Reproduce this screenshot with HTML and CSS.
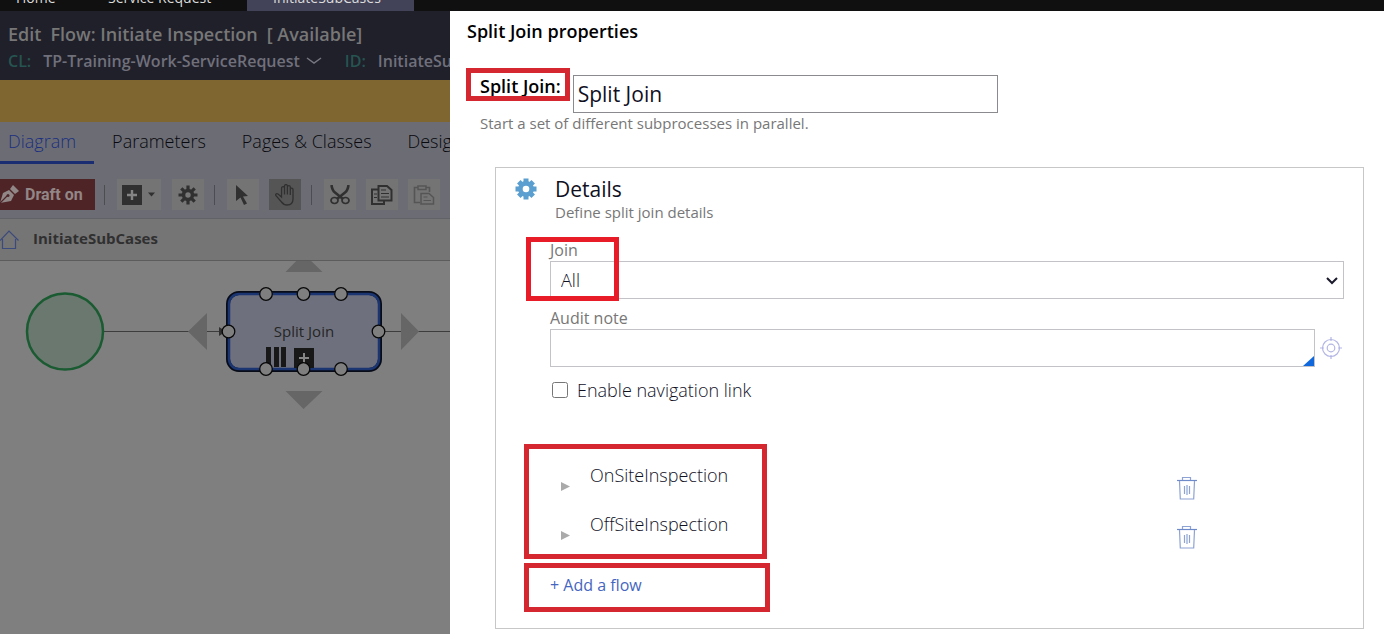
FILE: index.html
```html
<!DOCTYPE html>
<html lang="en">
<head>
<meta charset="utf-8">
<title>Split Join properties</title>
<link rel="stylesheet" href="styles.css">
</head>
<body>
<nav class="topbar">
  <a class="toptab toptab-home" href="#">Home</a>
  <a class="toptab toptab-service" href="#">Service Request</a>
  <a class="toptab toptab-active" href="#">InitiateSubCases</a>
</nav>
<div class="workspace">
  <section class="editor">
    <header class="rule-header">
      <h1 class="rule-title"><span>Edit</span><span>Flow: Initiate Inspection</span><span>[ Available]</span></h1>
      <div class="rule-meta">
        <span class="meta-key">CL:</span><span class="meta-class">TP-Training-Work-ServiceRequest</span>
        <svg class="meta-chevron" width="16" height="8" viewBox="0 0 16 8"><path d="M1 1l7 5 7-5" fill="none" stroke="#777781" stroke-width="1.5"/></svg>
        <span class="meta-key">ID:</span><span>InitiateSubCases</span>
      </div>
    </header>
    <div class="warning-bar"></div>
    <nav class="tabs">
      <a class="tab tab-active" href="#">Diagram</a>
      <a class="tab" href="#">Parameters</a>
      <a class="tab" href="#">Pages &amp; Classes</a>
      <a class="tab" href="#">Design</a>
    </nav>
    <div class="toolbar">
      <button class="draft"><svg width="19" height="19" viewBox="0 0 19 19"><path d="M0 18L3 8l6-3 5 5-3 6z" fill="#918787"/><path d="M10 4l3-4 6 6-4 3z" fill="#918787"/><path d="M0 18l7-7" stroke="#4e2427" stroke-width="1.200"/><circle cx="8" cy="10.500" r="1.500" fill="#4e2427"/></svg>Draft on</button>
      <span class="divider"></span>
      <button class="tool tool-add" aria-label="Add shape"><svg width="34" height="20" viewBox="0 0 34 20"><path d="M0 0h20v20H0z" fill="#303030"/><path d="M10 5v10M5 10h10" stroke="#858585" stroke-width="2.400"/><path d="M26 7.500h7l-3.500 4z" fill="#303030"/></svg></button>
      <button class="tool" aria-label="Settings"><svg width="20" height="20" viewBox="-10 -10 20 20"><g stroke="#303030" stroke-width="3.200"><path d="M0-9.500V9.500M-9.500 0H9.500M-6.700-6.700L6.700 6.700M6.700-6.700L-6.700 6.700"/></g><circle r="6.200" fill="#303030"/><circle r="2.700" fill="#777"/></svg></button>
      <span class="divider"></span>
      <button class="tool tool-select" aria-label="Select"><svg width="20" height="20" viewBox="0 0 20 20"><path d="M3 0l12 11-5 .5 4 7-3 1.500-3.500-7.500L3 16z" fill="#303030"/></svg></button>
      <button class="tool tool-on" aria-label="Pan"><svg width="20" height="22" viewBox="0 0 20 22"><path d="M6.500 13L3 10c-1.500-1-3 .2-2 1.700L6.500 18c1.500 2 3 3 5.500 3 4 0 6-2 6-6V5.500c0-1.800-2.700-1.800-2.700 0V11 3c0-1.900-2.900-1.900-2.900 0v7.500V2c0-1.900-2.900-1.900-2.900 0v8.500V4c0-1.800-2.900-1.800-2.900 0z" fill="none" stroke="#303030" stroke-width="1.300"/></svg></button>
      <span class="divider"></span>
      <button class="tool" aria-label="Cut"><svg width="20" height="20" viewBox="0 0 20 20"><path d="M1.500 0C2 4 3 6 5 7.500l8 6.500M18.500 0C18 4 17 6 15 7.500L7 14" fill="none" stroke="#303030" stroke-width="2.600"/><ellipse cx="4.500" cy="15.500" rx="3.500" ry="3" fill="none" stroke="#303030" stroke-width="1.700"/><ellipse cx="15.500" cy="15.500" rx="3.500" ry="3" fill="none" stroke="#303030" stroke-width="1.700"/></svg></button>
      <button class="tool" aria-label="Copy"><svg width="22" height="20" viewBox="0 0 22 20"><path d="M7 4.500H1V19h12v-3" fill="none" stroke="#303030" stroke-width="2"/><path d="M7.500 1H16l4.500 4v10.500h-13z" fill="none" stroke="#303030" stroke-width="2"/><path d="M10 5h5M10 8.500h8M10 12h8M3 9h3M3 12.500h3" stroke="#303030" stroke-width="1.200"/></svg></button>
      <button class="tool" aria-label="Paste"><svg width="22" height="20" viewBox="0 0 22 20"><path d="M7 17.500H1.500v-15H5m8 0h3.500V7" fill="none" stroke="#555" stroke-width="1.600"/><path d="M5 1h8v3.500H5zM8 8.500h8l4.500 4V19H8z" fill="none" stroke="#555" stroke-width="1.500"/><path d="M10.500 12h4M10.500 15.500h7.500" stroke="#555"/></svg></button>
      <button class="tool" aria-label="Delete"></button>
    </div>
    <div class="crumbs">
      <svg width="19" height="24" viewBox="0 -4 19 24"><path d="M0 10.500L9 1l9.500 9.500M2.500 9v9.500h13V9" fill="none" stroke="#3b4a7c" stroke-width="1.200"/></svg>
      <span>InitiateSubCases</span>
    </div>
    <div class="canvas">
      <svg class="diagram" width="450" height="370" viewBox="0 261 450 370">
        <path d="M103 331.500H450" stroke="#3d3d3d"/>
        <circle cx="65" cy="331.500" r="38" fill="#6b786f" stroke="#1a5b32" stroke-width="2.500"/>
        <g fill="#666"><path d="M188 331.500l19-18.500v37zM419 331.500l-18-18.500v37zM303.500 253.500l19 18.500h-37zM303.500 409l19-18h-37z"/></g>
        <path d="M219 327l7 4.500-7 4.500z" fill="#303030"/>
        <rect x="228" y="293" width="152" height="77" rx="11" fill="#6e717d" stroke="#080c18" stroke-width="4"/>
        <rect x="229" y="294" width="150" height="75" rx="10" fill="none" stroke="#1b3572" stroke-width="2.500"/>
        <text class="node-label" x="304" y="337" text-anchor="middle">Split Join</text>
        <path d="M266 347h5v20h-5zM274 347h5v20h-5zM281 347h5v20h-5zM294 348h20v20h-20z" fill="#181818"/>
        <path d="M304 353v10M299 358h10" stroke="#858585" stroke-width="2"/>
        <g fill="#7f7f7f" stroke="#080808" stroke-width="1.300"><circle cx="266" cy="294" r="6.300"/><circle cx="303.500" cy="294" r="6.300"/><circle cx="341" cy="294" r="6.300"/><circle cx="228.500" cy="331.500" r="6.300"/><circle cx="378.500" cy="331.500" r="6.300"/><circle cx="266" cy="369" r="6.300"/><circle cx="303.500" cy="369" r="6.300"/><circle cx="341" cy="369" r="6.300"/></g>
      </svg>
    </div>
  </section>
  <main class="panel">
    <h2 class="panel-title">Split Join properties</h2>
    <div class="name-row">
      <label class="name-label" for="name">Split Join:<span class="mark mark-name"></span></label>
      <input class="field name-field" id="name" value="Split Join">
    </div>
    <p class="hint">Start a set of different subprocesses in parallel.</p>
    <section class="card">
      <header class="card-head">
        <svg width="22" height="22" viewBox="-11 -11 22 22"><g stroke="#5a9fd0" stroke-width="5"><path d="M0-10.500V10.500M-10.500 0H10.500M-7.200-7.200L7.200 7.200M7.200-7.200L-7.200 7.200"/></g><circle r="7.900" fill="#5a9fd0"/><circle r="3.300" fill="#fff"/></svg>
        <div><h3 class="card-title">Details</h3><p class="hint card-hint">Define split join details</p></div>
      </header>
      <div class="form">
        <div class="group">
          <label class="label" for="join">Join</label>
          <select class="field join-field" id="join"><option>All</option></select>
          <svg class="select-arrow" width="12" height="8" viewBox="0 0 12 8"><path d="M1 1l5 5 5-5" fill="none" stroke="#1a1a2c" stroke-width="2"/></svg>
          <span class="mark mark-join"></span>
        </div>
        <label class="label audit-label" for="audit">Audit note</label>
        <div class="audit-row">
          <div class="audit-wrap"><input class="field" id="audit"><span class="corner"></span></div>
          <button class="icon-button" aria-label="Select audit note"><svg width="22" height="22" viewBox="0 0 22 22"><g fill="none" stroke="#b3b5e4" stroke-width="1.200"><circle cx="11" cy="11" r="8.500"/><circle cx="11" cy="11" r="3.800"/><path d="M11 0v4M11 18v4M0 11h4M18 11h4"/></g></svg></button>
        </div>
        <label class="check"><input type="checkbox">Enable navigation link</label>
        <div class="flows">
          <div class="flow"><button class="expand" aria-label="Expand OnSiteInspection"><svg width="9" height="9" viewBox="0 0 9 9"><path d="M0 0l9 4.500L0 9z" fill="#aaa"/></svg></button><span class="flow-name">OnSiteInspection</span><button class="icon-button" aria-label="Delete OnSiteInspection"><svg width="20" height="24" viewBox="0 0 20 24"><g fill="none" stroke="#8ea3d4" stroke-width="1.200"><path d="M0 4.500h20" stroke="#6f8ac8"/><path d="M5.500 4V1.500h8V4M2.500 5l.8 18h13.400l.8-18M7.500 10v8M10 9v10M12.500 10v8"/></g></svg></button></div>
          <div class="flow"><button class="expand" aria-label="Expand OffSiteInspection"><svg width="9" height="9" viewBox="0 0 9 9"><path d="M0 0l9 4.500L0 9z" fill="#aaa"/></svg></button><span class="flow-name">OffSiteInspection</span><button class="icon-button" aria-label="Delete OffSiteInspection"><svg width="20" height="24" viewBox="0 0 20 24"><g fill="none" stroke="#8ea3d4" stroke-width="1.200"><path d="M0 4.500h20" stroke="#6f8ac8"/><path d="M5.500 4V1.500h8V4M2.500 5l.8 18h13.400l.8-18M7.500 10v8M10 9v10M12.500 10v8"/></g></svg></button></div>
          <span class="mark mark-flows"></span>
        </div>
        <div class="add"><a class="add-link" href="#">+ Add a flow</a><span class="mark mark-add"></span></div>
      </div>
    </section>
  </main>
</div>
</body>
</html>
```
FILE: styles.css
```css
* { box-sizing: border-box; }
body { margin: 0; min-height: 100vh; display: flex; flex-direction: column; font-family: "Open Sans", "Noto Sans", sans-serif; font-size: 18px; font-weight: 300; color: #10101f; background: #fff; }
h1, h2, h3, p { margin: 0; }
a { text-decoration: none; color: inherit; }
button { border: 0; padding: 0; background: none; font: inherit; color: inherit; }
svg { display: block; flex: none; }

.topbar { display: flex; align-items: flex-end; height: 11px; overflow: hidden; background: #101010; color: #dcdcdc; font-size: 14px; font-weight: 500; line-height: 26px; }
.toptab-home { padding: 0 16px; width: 92px; }
.toptab-service { padding: 0 16px; width: 155px; white-space: nowrap; }
.toptab-active { padding: 0 26px; width: 167px; background: #424258; }

.workspace { flex: 1; display: flex; }
.editor { flex: 0 0 450px; overflow: hidden; display: flex; flex-direction: column; background: #7f7f7f; }
.rule-header { height: 69px; padding: 10px 8px 0; background: #20202b; font-weight: 600; white-space: nowrap; }
.rule-title { display: flex; gap: 9px; font-size: 18px; line-height: 26px; font-weight: 600; color: #777; }
.rule-meta { display: flex; align-items: center; margin-top: 1px; font-size: 16px; line-height: 26px; color: #70707b; }
.meta-key { color: #265450; margin-right: 12px; }
.meta-chevron { margin: 0 23px 0 6px; }
.warning-bar { height: 42px; background: #7f6530; }
.tabs { display: flex; gap: 36px; height: 43px; padding-left: 8px; background: #6c6d74; color: #08080e; line-height: 38px; white-space: nowrap; }
.tab-active { color: #1b2f80; border-bottom: 3px solid #1b2d72; margin-left: -8px; padding-left: 8px; padding-right: 18px; margin-right: -18px; height: 42px; }
.toolbar { display: flex; align-items: center; height: 54px; padding-top: 6px; background: #6c6d74; border-bottom: 1px solid #606268; }
.draft { flex: none; display: flex; align-items: center; gap: 6px; width: 95px; height: 31px; background: #4e2427; color: #928686; font-family: Roboto, sans-serif; font-size: 16px; font-weight: 700; white-space: nowrap; }
.divider { flex: none; width: 1px; height: 20px; margin: 0 12px 0 9px; background: #4c4d52; }
.tool { flex: none; display: flex; align-items: center; justify-content: center; width: 32px; height: 31px; background: #747474; margin-right: 10px; }
.tool-add { width: 44px; margin-right: 11px; }
.tool + .divider { margin-left: 0; }
.tool-on { background: #555; }
.crumbs { display: flex; align-items: center; gap: 14px; height: 42px; padding-bottom: 4px; background: #757575; border-bottom: 1px solid #5c5c5c; color: #303030; font-size: 15px; font-weight: 700; }
.canvas { flex: 1; overflow: hidden; }
.node-label { font-size: 15px; font-weight: 400; fill: #252525; }

.panel { flex: 1; min-width: 0; padding: 0 20px 5px 30px; background: #fff; }
.panel-title { margin-left: -13px; padding-top: 7px; font-size: 18px; line-height: 26px; font-weight: 600; color: #000; }
.name-row { display: flex; align-items: flex-start; gap: 12px; margin-top: 31px; }
.name-label { position: relative; line-height: 22px; font-size: 18px; font-weight: 600; color: #000; }
.field { width: 100%; height: 38px; padding: 0 4px; border: 1px solid #c3c3c7; border-radius: 0; background: #fff; color: #10101f; font: inherit; }
.name-field { width: 425px; border-color: #8b8b8f; font-size: 21px; font-weight: 400; }
.hint { font-size: 15px; line-height: 20px; font-weight: 400; color: #777; }
.card { margin: 34px 0 0 15px; padding: 8px 19px 0; border: 1px solid #c7c7c7; min-height: 462px; }
.card-head { display: flex; gap: 18px; }
.card-head svg { margin-top: 2px; }
.card-title { font-size: 21px; line-height: 26px; font-weight: 400; color: #10101f; }
.form { padding-left: 35px; margin-top: 17px; }
.group { position: relative; }
.label { display: block; font-size: 16px; line-height: 22px; font-weight: 400; color: #777; }
.join-field { appearance: none; padding: 0 10px; }
.select-arrow { position: absolute; right: 6px; bottom: 14px; pointer-events: none; }
.audit-label { margin-top: 8px; }
.audit-row { display: flex; align-items: center; gap: 5px; }
.audit-wrap { position: relative; flex: 1; display: flex; }
.corner { position: absolute; right: 1px; bottom: 1px; border-left: 11px solid transparent; border-bottom: 10px solid #1068dc; }
.icon-button { margin-right: 2px; }
.check { display: flex; align-items: center; gap: 9px; margin-top: 10px; line-height: 26px; }
.check input { width: 16px; height: 16px; margin: 0 0 0 2px; }
.flows { position: relative; padding: 52px 0 20px; }
.flow { display: flex; align-items: flex-start; height: 49px; }
.expand { margin: 27px 20px 0 11px; }
.flow-name { flex: 1; line-height: 40px; }
.flow .icon-button { margin: 21px 147px 0 0; }
.add { position: relative; line-height: 22px; }
.add-link { font-size: 16px; font-weight: 400; color: #4566c0; }
.mark { position: absolute; border: 5px solid #e81c28; pointer-events: none; }
.mark-name { left: -14px; right: -9px; top: -7px; height: 33px; border-color: #d42730; }
.mark-join { left: -24px; top: -2px; width: 93px; bottom: -2px; }
.mark-flows { left: -26px; width: 243px; top: 41px; height: 115px; border-color: #d42730; }
.mark-add { left: -26px; width: 246px; top: -10px; height: 49px; border-color: #d42730; }
```
